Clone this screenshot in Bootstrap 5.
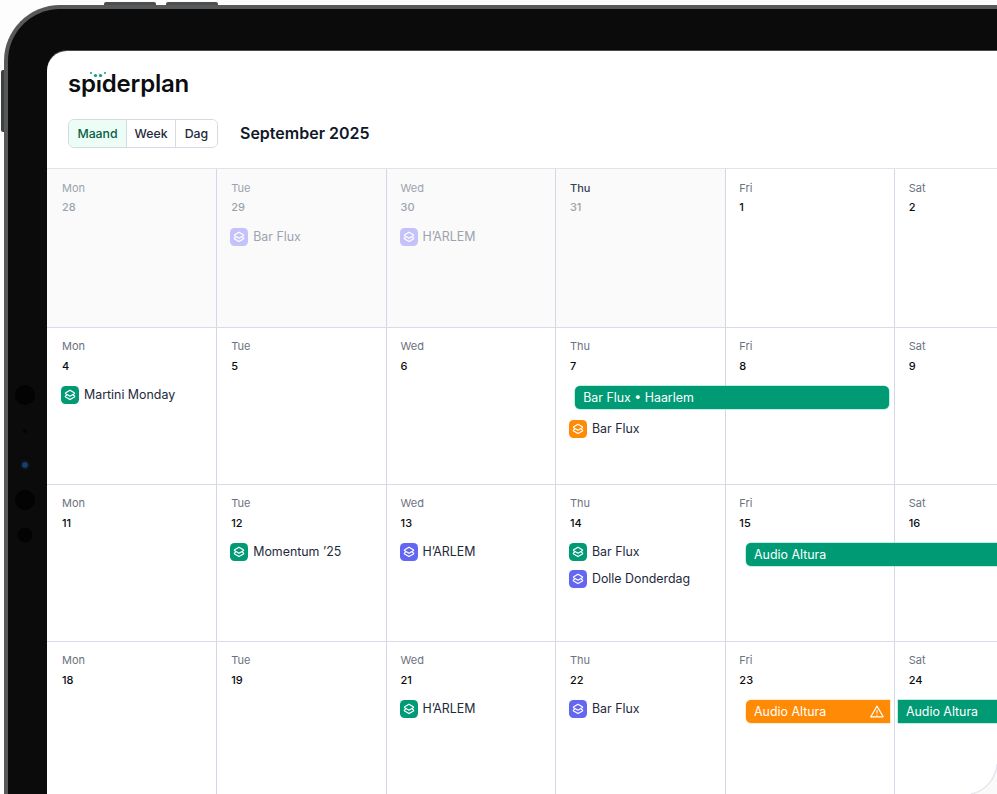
<!DOCTYPE html>
<html lang="nl">
<head>
<meta charset="utf-8">
<title>Spiderplan</title>
<link href="https://cdn.jsdelivr.net/npm/bootstrap@5.3.0/dist/css/bootstrap.min.css" rel="stylesheet">
<style>
html,body{height:794px;overflow:hidden;background:#fdfdfd;font-family:"Inter","Liberation Sans",sans-serif;}
.sp-stage{position:relative;height:794px;width:997px;overflow:hidden;padding:5px 0 0 4px;}
.sp-device{position:relative;width:1200px;height:1000px;background:#0b0b0b;border-top:4px solid #57585a;border-left:4px solid #57585a;border-top-left-radius:56px;padding:42px 0 0 39px;}
.sp-screen{width:1150px;height:950px;background:#fff;border-top-left-radius:20px;box-shadow:0 -1px 0 #4a4a4c;}
.sp-btn-top{position:absolute;top:2px;width:52px;height:3px;background:#4d4e50;border-radius:2px 2px 0 0;}
.sp-btn-side{position:absolute;left:1px;top:70px;width:3px;height:62px;background:#3f4042;border-radius:2px 0 0 2px;}
.sp-cam{position:absolute;border-radius:50%;background:#030303;transform:translate(-50%,-50%);}
.sp-cam-blue{background:radial-gradient(circle,#17406f 0 30%,#0a0f18 55%,#1c1e22 100%);}
.sp-head{padding:19px 0 20px 21px;}
.sp-logo{position:relative;font-weight:600;font-size:24px;line-height:27px;color:#0b0d10;letter-spacing:-.2px;height:27px;width:122px;}
.sp-logo-dots{position:absolute;left:21px;top:1px;}
.sp-tabs{margin-top:22px;gap:22px;}
.sp-tabgroup{border:1px solid #d3dae3;border-radius:6px;overflow:hidden;height:29px;width:150px;}
.sp-tab{font-size:12.3px;font-weight:500;color:#1e293b;text-align:center;line-height:27px;background:#fff;border-left:1px solid #d3dae3;width:49px;}
.sp-tab-on{background:#ecfdf5;color:#065f46;width:57px;border-left:0;}
.sp-tab-end{width:42px;}
.sp-month{font-size:16px;font-weight:600;color:#111827;margin:0;}
.sp-week{display:grid;grid-template-columns:repeat(5,169.4px) 320px;border-top:1px solid #d8dbe9;height:157px;}
.sp-week-first{height:159px;border-top-color:#dfe3ea;}
.sp-week-last{height:200px;}
.sp-cell{grid-row:1;padding:10px 0 0 13.8px;border-left:1px solid #d3d8e6;}
.sp-cell:nth-child(1){grid-column:1;border-left:0;padding-left:15px;}
.sp-cell:nth-child(2){grid-column:2;}
.sp-cell:nth-child(3){grid-column:3;}
.sp-cell:nth-child(4){grid-column:4;}
.sp-cell:nth-child(5){grid-column:5;}
.sp-cell:nth-child(6){grid-column:6;}
.sp-week-first .sp-cell{padding-top:11px;}
.sp-week-first .sp-num{margin-top:3px;}
.sp-week-first .sp-first{margin-top:13px;}
.sp-past{background:#fafafa;}
.sp-dayname{font-size:11px;line-height:16px;color:#6b7280;}
.sp-past .sp-dayname,.sp-past .sp-num{color:#9ca3af;}
.sp-past .sp-today{color:#374151;font-weight:500;}
.sp-num{font-size:11px;line-height:16px;margin-top:4px;font-weight:500;color:#0b0d10;}
.sp-event{display:flex;align-items:center;gap:5px;font-size:12.4px;line-height:18px;color:#1e293b;margin-top:9px;margin-left:-1px;}
.sp-first{margin-top:12px;}
.sp-ico{flex:none;display:block;}
.sp-event-faded{color:#9ca3af;}
.sp-slot{height:23px;margin-top:12px;margin-bottom:11px;}
.sp-slot + .sp-event{margin-top:0;}
.sp-bar{grid-row:1;align-self:start;height:23px;margin-top:58px;border-radius:5px;color:#fff;font-size:12.4px;line-height:23px;padding:0 8px;display:flex;justify-content:space-between;align-items:center;z-index:1;}
.sp-green{background:#009a75;box-shadow:0 0 0 .5px #7fe0c4;}
.sp-orange{background:#ff8a05;box-shadow:0 0 0 .5px #ffd9a8;padding-right:6px;}
.sp-corner{position:absolute;right:0;bottom:0;}
</style>
</head>
<body>
<div class="sp-stage">
  <span class="sp-btn-top" style="left:104px"></span>
  <span class="sp-btn-top" style="left:166px"></span>
  <span class="sp-btn-side"></span>
  <div class="sp-device">
    <span class="sp-cam" style="left:17px;top:386px;width:20px;height:20px"></span>
    <span class="sp-cam" style="left:17px;top:422px;width:4px;height:4px"></span>
    <span class="sp-cam sp-cam-blue" style="left:17px;top:456px;width:10px;height:10px"></span>
    <span class="sp-cam" style="left:17px;top:491px;width:20px;height:20px"></span>
    <span class="sp-cam" style="left:17px;top:526px;width:15px;height:15px"></span>
    <div class="sp-screen">
      <div class="sp-head">
        <div class="sp-logo">spiderplan
          <svg class="sp-logo-dots" width="18" height="9" viewBox="0 0 18 9" aria-hidden="true"><rect x="3" y="3" width="12" height="6" fill="#fff"/><g fill="#0e9b7c"><circle cx="2" cy="2" r="1"/><circle cx="6.500" cy="4.500" r="1.600"/><circle cx="11.500" cy="4.500" r="1.600"/><circle cx="16" cy="2" r="1"/></g></svg>
        </div>
        <div class="sp-tabs d-flex align-items-center">
          <div class="sp-tabgroup d-flex">
            <div class="sp-tab sp-tab-on">Maand</div>
            <div class="sp-tab">Week</div>
            <div class="sp-tab sp-tab-end">Dag</div>
          </div>
          <h1 class="sp-month">September 2025</h1>
        </div>
      </div>

      <svg width="0" height="0" class="position-absolute" aria-hidden="true">
        <symbol id="sp-stack" viewBox="0 0 18 18">
          <path d="M9 4.200 13.300 6.800c.4.2.4.7 0 .9L9 10.200 4.700 7.700c-.4-.2-.4-.7 0-.9Z" fill="none" stroke="#fff" stroke-width="1.200" stroke-linejoin="round"/>
          <path d="M5.400 9.200 4.600 9.900c-.4.3-.4.8 0 1L9 13.600l4.400-2.700c.4-.2.4-.7 0-1l-.8-.7" fill="none" stroke="#fff" stroke-width="1.200" stroke-linecap="round" stroke-linejoin="round"/>
        </symbol>
      </svg>

      <div class="sp-week sp-week-first">
        <div class="sp-cell sp-past"><div class="sp-dayname">Mon</div><div class="sp-num">28</div></div>
        <div class="sp-cell sp-past"><div class="sp-dayname">Tue</div><div class="sp-num">29</div>
          <div class="sp-event sp-first sp-event-faded"><svg class="sp-ico" width="18" height="18"><rect width="18" height="18" rx="4.500" fill="#c5c2fb"/><use href="#sp-stack"/></svg>Bar Flux</div></div>
        <div class="sp-cell sp-past"><div class="sp-dayname">Wed</div><div class="sp-num">30</div>
          <div class="sp-event sp-first sp-event-faded"><svg class="sp-ico" width="18" height="18"><rect width="18" height="18" rx="4.500" fill="#c5c2fb"/><use href="#sp-stack"/></svg>H’ARLEM</div></div>
        <div class="sp-cell sp-past"><div class="sp-dayname sp-today">Thu</div><div class="sp-num">31</div></div>
        <div class="sp-cell"><div class="sp-dayname">Fri</div><div class="sp-num">1</div></div>
        <div class="sp-cell"><div class="sp-dayname">Sat</div><div class="sp-num">2</div></div>
      </div>

      <div class="sp-week">
        <div class="sp-cell"><div class="sp-dayname">Mon</div><div class="sp-num">4</div>
          <div class="sp-event sp-first"><svg class="sp-ico" width="18" height="18"><rect width="18" height="18" rx="4.500" fill="#009a75"/><use href="#sp-stack"/></svg>Martini Monday</div></div>
        <div class="sp-cell"><div class="sp-dayname">Tue</div><div class="sp-num">5</div></div>
        <div class="sp-cell"><div class="sp-dayname">Wed</div><div class="sp-num">6</div></div>
        <div class="sp-cell"><div class="sp-dayname">Thu</div><div class="sp-num">7</div>
          <div class="sp-slot"></div>
          <div class="sp-event"><svg class="sp-ico" width="18" height="18"><rect width="18" height="18" rx="4.500" fill="#ff8a05"/><use href="#sp-stack"/></svg>Bar Flux</div></div>
        <div class="sp-cell"><div class="sp-dayname">Fri</div><div class="sp-num">8</div></div>
        <div class="sp-cell"><div class="sp-dayname">Sat</div><div class="sp-num">9</div></div>
        <div class="sp-bar sp-green" style="grid-column:4 / span 2;margin-left:20px;margin-right:5px">Bar Flux • Haarlem</div>
      </div>

      <div class="sp-week">
        <div class="sp-cell"><div class="sp-dayname">Mon</div><div class="sp-num">11</div></div>
        <div class="sp-cell"><div class="sp-dayname">Tue</div><div class="sp-num">12</div>
          <div class="sp-event sp-first"><svg class="sp-ico" width="18" height="18"><rect width="18" height="18" rx="4.500" fill="#009a75"/><use href="#sp-stack"/></svg>Momentum ’25</div></div>
        <div class="sp-cell"><div class="sp-dayname">Wed</div><div class="sp-num">13</div>
          <div class="sp-event sp-first"><svg class="sp-ico" width="18" height="18"><rect width="18" height="18" rx="4.500" fill="#6366f1"/><use href="#sp-stack"/></svg>H’ARLEM</div></div>
        <div class="sp-cell"><div class="sp-dayname">Thu</div><div class="sp-num">14</div>
          <div class="sp-event sp-first"><svg class="sp-ico" width="18" height="18"><rect width="18" height="18" rx="4.500" fill="#009a75"/><use href="#sp-stack"/></svg>Bar Flux</div>
          <div class="sp-event"><svg class="sp-ico" width="18" height="18"><rect width="18" height="18" rx="4.500" fill="#6366f1"/><use href="#sp-stack"/></svg>Dolle Donderdag</div></div>
        <div class="sp-cell"><div class="sp-dayname">Fri</div><div class="sp-num">15</div></div>
        <div class="sp-cell"><div class="sp-dayname">Sat</div><div class="sp-num">16</div></div>
        <div class="sp-bar sp-green" style="grid-column:5 / span 2;margin-left:21.500px">Audio Altura</div>
      </div>

      <div class="sp-week sp-week-last">
        <div class="sp-cell"><div class="sp-dayname">Mon</div><div class="sp-num">18</div></div>
        <div class="sp-cell"><div class="sp-dayname">Tue</div><div class="sp-num">19</div></div>
        <div class="sp-cell"><div class="sp-dayname">Wed</div><div class="sp-num">21</div>
          <div class="sp-event sp-first"><svg class="sp-ico" width="18" height="18"><rect width="18" height="18" rx="4.500" fill="#009a75"/><use href="#sp-stack"/></svg>H’ARLEM</div></div>
        <div class="sp-cell"><div class="sp-dayname">Thu</div><div class="sp-num">22</div>
          <div class="sp-event sp-first"><svg class="sp-ico" width="18" height="18"><rect width="18" height="18" rx="4.500" fill="#6366f1"/><use href="#sp-stack"/></svg>Bar Flux</div></div>
        <div class="sp-cell"><div class="sp-dayname">Fri</div><div class="sp-num">23</div></div>
        <div class="sp-cell"><div class="sp-dayname">Sat</div><div class="sp-num">24</div></div>
        <div class="sp-bar sp-orange rounded-end-0" style="grid-column:5;margin-left:21.500px;margin-right:4px">Audio Altura
          <svg width="14" height="13" viewBox="0 0 13 12" aria-hidden="true"><path d="M6.500 1 12.300 11H.7Z" fill="none" stroke="#fff" stroke-width="1" stroke-linejoin="round"/><path d="M6.500 4.500V7.800" stroke="#fff"/><circle cx="6.500" cy="9.400" r=".6" fill="#fff"/></svg></div>
        <div class="sp-bar sp-green rounded-start-0" style="grid-column:6;margin-left:4px">Audio Altura</div>
      </div>
    </div>
  </div>
  <svg class="sp-corner" width="30" height="30" viewBox="0 0 30 30" aria-hidden="true"><path d="M30 0C29 14 19 27 4 30H30Z" fill="#fafafa" stroke="none"/><path d="M30 0C29 14 19 27 4 30" fill="none" stroke="#e5e7ee" stroke-width="1.500"/></svg>
</div>
<script src="https://cdn.jsdelivr.net/npm/bootstrap@5.3.0/dist/js/bootstrap.bundle.min.js"></script>
</body>
</html>
